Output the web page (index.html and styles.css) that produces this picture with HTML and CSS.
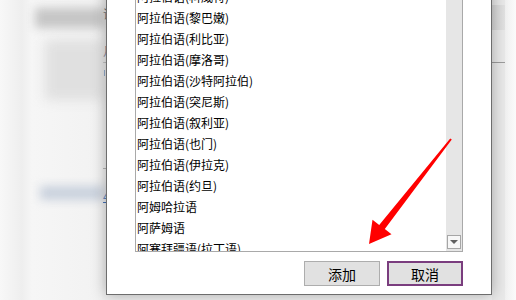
FILE: index.html
```html
<!DOCTYPE html>
<html lang="zh-CN">

<head>
    <meta charset="UTF-8">
    <title>添加语言</title>
    <link rel="stylesheet" href="styles.css">
</head>

<body>

    <div class="desk">
        <div class="bg-left">
            <div class="blur-band"></div>
            <div class="blur-box"></div>
            <div class="blur-link"></div>
        </div>
        <div class="bg-edge">
            <span class="frag-title">请</span>
            <span class="frag-label">月</span>
            <div class="frag-line"></div>
            <div class="frag-tick"></div>
            <div class="frag-rule"></div>
            <span class="frag-link">4</span>
        </div>
        <div class="bg-mid"></div>
        <div class="bg-right">
            <div class="r-band"></div>
            <div class="r-line"></div>
        </div>
        <div class="bg-far"></div>
    </div>

    <div class="dialog">
        <div class="listbox">
            <ul class="items">
                <li>阿拉伯语(科威特)</li>
                <li>阿拉伯语(黎巴嫩)</li>
                <li>阿拉伯语(利比亚)</li>
                <li>阿拉伯语(摩洛哥)</li>
                <li>阿拉伯语(沙特阿拉伯)</li>
                <li>阿拉伯语(突尼斯)</li>
                <li>阿拉伯语(叙利亚)</li>
                <li>阿拉伯语(也门)</li>
                <li>阿拉伯语(伊拉克)</li>
                <li>阿拉伯语(约旦)</li>
                <li>阿姆哈拉语</li>
                <li>阿萨姆语</li>
                <li>阿塞拜疆语(拉丁语)</li>
                <li>阿塞拜疆语(西里尔文)</li>
            </ul>
            <div class="scrollbar">
                <div class="scroll-down"><span class="tri"></span></div>
            </div>
        </div>
        <div class="actions">
            <button class="btn">添加</button>
            <button class="btn btn-focus">取消</button>
        </div>
    </div>

    <!-- annotation arrow -->
    <svg class="arrow" width="516" height="300" viewBox="0 0 516 300">
        <polygon fill="#ff0000"
            points="369,244 372.5,219.7 379.2,224.9 450.2,138.4 451.8,139.6 384.8,229.1 391.5,234.3" />
    </svg>

</body>

</html>
```

FILE: styles.css
```css
body {
    margin: 0;
    width: 516px;
    height: 300px;
    overflow: hidden;
    position: relative;
    background-color: #f5f5f5;
    font-family: "Microsoft YaHei", "Noto Sans CJK SC", sans-serif;
}

/* window behind the dialog */
.desk {
    display: flex;
    height: 300px;
}

.bg-left {
    width: 102px;
    flex-shrink: 0;
    background: linear-gradient(to right, #f8f8f8 0, #eeeeee 22px, #f6f6f6 32px, #f2f2f2 100%);
}

.blur-band {
    margin: 8px 0 0 35px;
    width: 70px;
    height: 20px;
    background-color: #c6c6c6;
    filter: blur(5px);
}

.blur-box {
    margin: 12px 0 0 45px;
    width: 60px;
    height: 60px;
    background-color: #e0e0e0;
    filter: blur(6px);
}

.blur-link {
    margin: 86px 0 0 40px;
    width: 65px;
    height: 14px;
    background-color: #c9d1dd;
    filter: blur(5px);
}

.bg-edge {
    width: 30px;
    flex-shrink: 0;
    display: flex;
    flex-direction: column;
    padding-left: 1px;
    background-color: #f0f0f0;
    font-size: 12px;
}

.frag-title {
    margin-top: 6px;
    height: 16px;
    line-height: 16px;
    color: #333;
}

.frag-label {
    margin-top: 21px;
    height: 16px;
    line-height: 16px;
    color: #4a3c5c;
}

.frag-line {
    margin-top: 3px;
    height: 1px;
    background-color: #9a9a9a;
}

.frag-tick {
    margin: 7px 0 0 1px;
    width: 1px;
    height: 6px;
    background-color: #3b6db3;
}

.frag-rule {
    margin-top: 92px;
    height: 1px;
    background-color: #b4b4b4;
}

.frag-link {
    margin-top: 20px;
    line-height: 14px;
    color: #2b5fae;
    text-decoration: underline;
}

.bg-mid {
    width: 359px;
    flex-shrink: 0;
    background-color: #f0f0f0;
}

.bg-right {
    width: 13px;
    flex-shrink: 0;
    background-color: #e9e9e9;
}

.r-band {
    margin-top: 5px;
    height: 25px;
    background: linear-gradient(to right, #d6d6d6, #e2e2e2);
}

.r-line {
    margin-top: 32px;
    height: 1px;
    background-color: #9c9c9c;
}

.bg-far {
    flex: 1;
    background: linear-gradient(to right, #f0f0f0, #fbfbfb);
}

/* dialog */
.dialog {
    position: absolute;
    left: 106px;
    top: -30px;
    width: 386px;
    box-sizing: border-box;
    padding: 9px 28px 8px;
    background-color: #fff;
    border: 1px solid #6d6d6d;
    box-shadow: 0 0 14px rgba(0, 0, 0, 0.3);
}

.listbox {
    display: flex;
    height: 272px;
    box-sizing: border-box;
    border: 1px solid #a9a9a9;
}

.items {
    flex: 1;
    margin: 0;
    padding: 5px 0 0 1px;
    list-style: none;
    overflow: hidden;
    font-size: 12px;
    line-height: 21px;
    color: #000;
    white-space: nowrap;
}

.scrollbar {
    width: 16px;
    display: flex;
    flex-direction: column;
    justify-content: flex-end;
    background-color: #e6e6e6;
}

.scroll-down {
    display: flex;
    align-items: center;
    justify-content: center;
    width: 14px;
    height: 14px;
    box-sizing: border-box;
    margin: 0 1px 2px 1px;
    background-color: #f7f7f7;
    border: 1px solid #a6a6a6;
}

.tri {
    width: 0;
    height: 0;
    border-left: 4px solid transparent;
    border-right: 4px solid transparent;
    border-top: 4px solid #606060;
}

.actions {
    display: flex;
    justify-content: flex-end;
    gap: 7px;
    margin-top: 9px;
}

.btn {
    width: 76px;
    height: 25px;
    box-sizing: border-box;
    padding: 0;
    background-color: #e1e1e1;
    border: 1px solid #adadad;
    font-family: inherit;
    font-size: 14px;
    line-height: 20px;
    color: #000;
}

.btn-focus {
    border: 2px solid #7a3d7e;
}

.arrow {
    position: absolute;
    left: 0;
    top: 0;
    pointer-events: none;
}
```
